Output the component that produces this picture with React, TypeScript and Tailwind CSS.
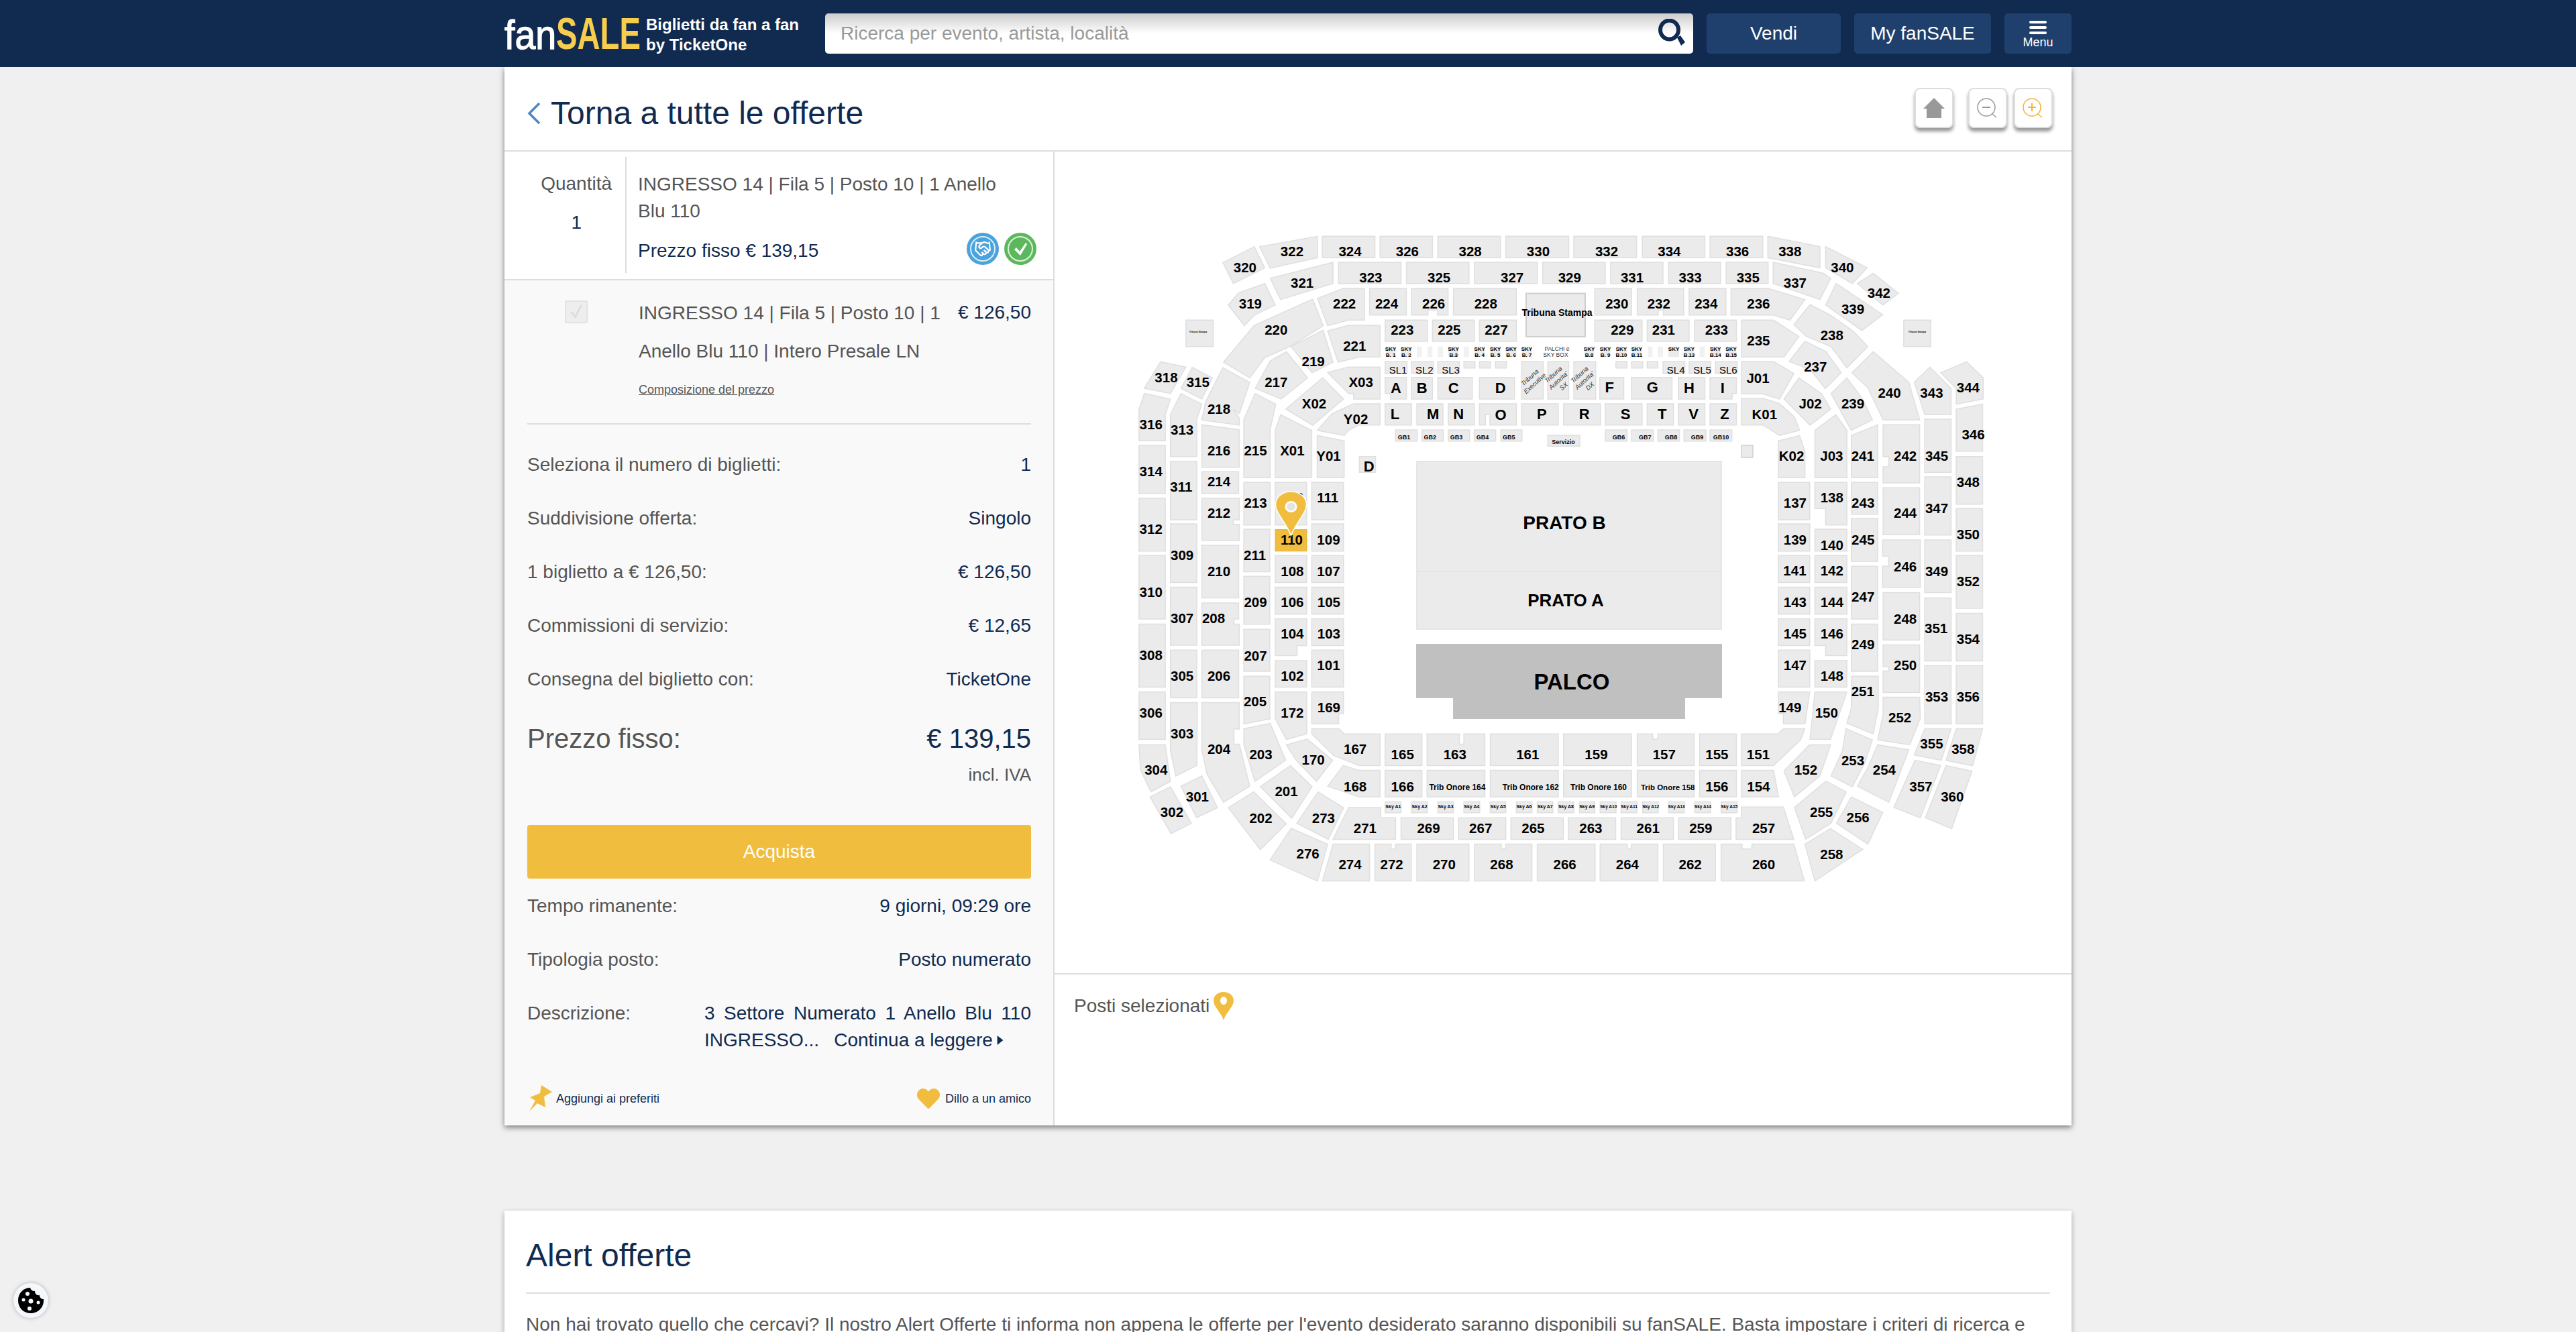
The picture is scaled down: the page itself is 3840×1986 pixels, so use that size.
import React from 'react'
import { FaHeart } from 'react-icons/fa'
import { Handshake } from 'lucide-react'

// Map data is written in the coordinates of four crops of the seating plan, then converted to page pixels
type Zone = { ox: number; oy: number; sx: number; sy: number }
type Sec = [string, number, number, string, number?, number?]

const ZA: Zone = { ox: 1680, oy: 320, sx: 2.24, sy: 3 }
const ZB: Zone = { ox: 2300, oy: 320, sx: 2.24, sy: 3 }
const ZC: Zone = { ox: 1680, oy: 780, sx: 2.24, sy: 2.8 }
const ZD: Zone = { ox: 2300, oy: 780, sx: 2.24, sy: 2.8 }

const R = (x1: number, y1: number, x2: number, y2: number) => `${x1},${y1} ${x2},${y1} ${x2},${y2} ${x1},${y2}`

const SECS_A: Sec[] = [
  ['322', 551, 165, '443,143 636,97 636,193 478,240'],
  ['324', 745, 165, R(652, 97, 828, 193)],
  ['326', 936, 165, R(845, 97, 1020, 193)],
  ['328', 1146, 165, R(1038, 97, 1247, 193)],
  ['330', 1373, 165, R(1265, 97, 1475, 193)],
  ['320', 394, 237, '320,215 425,143 460,238 355,308'],
  ['321', 585, 305, '478,285 688,213 688,308 513,380'],
  ['323', 814, 282, R(706, 213, 915, 308)],
  ['325', 1042, 282, R(933, 213, 1142, 308)],
  ['327', 1286, 282, R(1160, 213, 1370, 308)],
  ['329', 1478, 282, R(1388, 213, 1597, 308)],
  ['319', 412, 398, '338,404 373,350 460,308 495,404 425,450 392,497'],
  ['222', 726, 398, '636,375 722,330 793,330 793,472 740,472 670,497'],
  ['224', 867, 398, R(810, 330, 933, 449)],
  ['226', 1024, 398, '950,330 1072,330 1072,449 1037,449 1037,427 1005,427 1005,449 950,449'],
  ['228', 1198, 398, R(1090, 330, 1300, 449)],
  ['220', 498, 516, '322,660 425,495 620,378 655,497 545,590 460,640 410,730'],
  ['223', 919, 516, R(862, 472, 1003, 567)],
  ['225', 1076, 516, R(1020, 472, 1160, 567)],
  ['227', 1233, 516, R(1177, 472, 1300, 567)],
  ['221', 760, 587, '670,520 740,495 845,495 845,637 775,637 705,660'],
  ['219', 622, 657, '548,590 655,517 688,660 618,707'],
  ['SL1', 905, 694, R(862, 657, 935, 710), 15, 400],
  ['SL2', 993, 694, R(950, 657, 1023, 710), 15, 400],
  ['SL3', 1081, 694, R(1038, 657, 1110, 710), 15, 400],
  ['', 0, 0, R(1125, 657, 1162, 686)],
  ['', 0, 0, R(1177, 657, 1214, 686)],
  ['', 0, 0, R(1230, 657, 1267, 686)],
  ['', 0, 0, R(1318, 657, 1390, 825)],
  ['', 0, 0, R(1405, 657, 1475, 825)],
  ['', 0, 0, R(1492, 657, 1565, 825)],
  ['A', 898, 774, '862,728 933,728 933,825 880,825 880,800 862,800', 22],
  ['B', 985, 774, R(950, 728, 1020, 825), 22],
  ['C', 1090, 774, R(1038, 728, 1153, 825), 22],
  ['D', 1247, 774, R(1177, 728, 1294, 825), 22],
  ['L', 895, 892, R(862, 846, 950, 941), 22],
  ['M', 1022, 892, R(968, 846, 1055, 941), 22],
  ['N', 1107, 892, R(1073, 846, 1160, 941), 22],
  ['O', 1248, 893, '1177,846 1300,846 1300,941 1212,941 1212,895 1197,895 1197,941 1177,941', 22],
  ['P', 1385, 892, R(1318, 846, 1440, 941), 22],
  ['R', 1527, 892, R(1458, 846, 1581, 941), 22],
  ['X03', 781, 749, '670,706 740,682 845,682 845,825 757,825 757,800 740,800'],
  ['X02', 625, 845, '530,870 653,730 723,825 620,942'],
  ['Y02', 764, 914, '635,965 685,890 757,846 845,846 845,941 775,941 740,965 725,988'],
  ['217', 498, 750, '428,777 478,655 532,613 603,730 515,825'],
  ['218', 307, 870, '250,918 262,838 320,685 410,750 375,890 355,870 375,910 375,942'],
  ['318', 131, 728, '58,777 112,658 197,682 145,800'],
  ['315', 237, 750, '180,777 218,683 285,730 250,825'],
  ['316', 80, 938, '40,870 58,800 145,825 128,895 128,1012 40,1012'],
  ['313', 184, 962, '145,895 180,800 250,848 233,915 233,1082 145,1082'],
  ['216', 307, 1055, '250,940 375,962 375,1130 250,1130'],
  ['215', 429, 1055, '390,915 428,800 497,848 478,960 478,1177 390,1177'],
  ['X01', 552, 1055, '495,965 513,895 617,965 617,1177 495,1177'],
  ['Y01', 673, 1078, '635,988 725,1012 725,1177 635,1177'],
  ['D', 808, 1125, R(776, 1082, 830, 1153), 22],
  ['214', 307, 1193, R(250, 1150, 373, 1247)],
  ['311', 181, 1217, R(145, 1103, 233, 1365)],
  ['314', 80, 1148, R(40, 1033, 128, 1247)],
  ['213', 429, 1290, R(390, 1198, 478, 1388)],
  ['112', 552, 1266, R(495, 1198, 600, 1388)],
  ['111', 670, 1266, R(617, 1198, 723, 1365)],
  ['312', 80, 1407, R(40, 1268, 128, 1505)],
  ['212', 307, 1335, '250,1268 375,1268 375,1365 355,1365 355,1385 375,1385 375,1457 250,1457'],
  ['', 0, 0, R(197, 472, 288, 590)],
  ['GB1', 925, 996, R(897, 963, 969, 1013), 9],
  ['GB2', 1012, 996, R(985, 963, 1056, 1013), 9],
  ['GB3', 1100, 996, R(1073, 963, 1144, 1013), 9],
  ['GB4', 1187, 996, R(1160, 963, 1231, 1013), 9],
  ['GB5', 1275, 996, R(1248, 963, 1319, 1013), 9],
  ['Servizio', 1457, 1015, R(1405, 987, 1512, 1036), 9],
]

const SECS_B: Sec[] = [
  ['332', 213, 165, R(103, 97, 313, 193)],
  ['334', 422, 165, R(332, 97, 541, 193)],
  ['336', 650, 165, R(558, 97, 734, 193)],
  ['338', 825, 165, '751,97 925,143 925,238 751,193'],
  ['340', 1000, 237, '944,143 1083,238 1033,308 944,238'],
  ['342', 1122, 350, '1103,262 1187,352 1135,404 1050,308'],
  ['331', 298, 282, R(226, 213, 401, 308)],
  ['333', 492, 282, R(419, 213, 593, 308)],
  ['335', 685, 282, R(612, 213, 752, 308)],
  ['337', 842, 305, '769,213 935,262 961,285 925,380 769,308'],
  ['339', 1035, 422, '979,308 1135,448 1065,518 944,404'],
  ['230', 247, 398, R(173, 330, 296, 449)],
  ['232', 387, 398, '315,330 470,330 470,449 402,449 402,427 385,427 385,449 315,449'],
  ['234', 545, 398, R(488, 330, 611, 449)],
  ['236', 720, 398, '628,330 752,330 875,380 825,472 770,449 628,449'],
  ['229', 265, 516, R(173, 472, 331, 567)],
  ['231', 403, 516, R(348, 472, 488, 567)],
  ['233', 580, 516, R(506, 472, 646, 567)],
  ['235', 720, 563, '663,472 770,472 855,545 805,637 663,637'],
  ['238', 965, 540, '838,492 892,402 960,450 1035,520 1085,590 1015,685 962,590 880,545'],
  ['237', 910, 680, '822,657 875,566 945,612 996,707 943,778 892,692'],
  ['', 0, 0, R(244, 657, 281, 686)],
  ['', 0, 0, R(296, 657, 333, 686)],
  ['', 0, 0, R(348, 657, 384, 686)],
  ['SL4', 444, 694, R(401, 657, 474, 710), 15, 400],
  ['SL5', 532, 694, R(488, 657, 561, 710), 15, 400],
  ['SL6', 619, 694, R(576, 657, 649, 710), 15, 400],
  ['F', 222, 770, R(190, 728, 270, 825), 22],
  ['G', 366, 770, R(296, 728, 431, 825), 22],
  ['H', 488, 774, R(452, 728, 541, 825), 22],
  ['I', 600, 774, '558,728 646,728 646,800 632,800 632,825 558,825', 22],
  ['S', 276, 892, R(208, 846, 331, 941), 22],
  ['T', 398, 892, R(348, 846, 436, 941), 22],
  ['V', 503, 892, R(452, 846, 541, 941), 22],
  ['Z', 607, 892, R(558, 846, 646, 941), 22],
  ['J01', 718, 730, '663,657 770,657 838,710 790,825 735,802 663,802'],
  ['K01', 740, 892, '663,823 738,823 790,845 840,905 857,965 790,988 735,941 663,941'],
  ['J02', 893, 845, '805,825 855,730 930,800 961,870 892,942'],
  ['239', 1035, 845, '962,800 1015,730 1065,820 1100,918 1030,965'],
  ['240', 1157, 798, '1032,707 1103,613 1222,750 1258,918 1136,918 1085,775'],
  ['343', 1298, 798, '1240,750 1292,682 1363,778 1363,895 1275,895'],
  ['344', 1420, 773, '1328,707 1415,658 1470,730 1470,825 1380,848 1380,778'],
  ['346', 1437, 984, '1380,870 1468,848 1468,1058 1380,1058'],
  ['K02', 830, 1080, '786,1012 857,988 875,1060 875,1177 786,1177'],
  ['J03', 964, 1080, '908,965 978,895 1015,965 1015,1177 908,1177'],
  ['241', 1068, 1078, '1030,988 1118,940 1118,1177 1030,1177'],
  ['242', 1210, 1078, '1136,940 1258,940 1258,1200 1136,1200 1136,1128 1155,1128 1155,1082 1136,1082'],
  ['345', 1315, 1080, R(1275, 915, 1363, 1153)],
  ['348', 1420, 1197, R(1380, 1082, 1468, 1295)],
  ['137', 842, 1290, R(786, 1198, 891, 1365)],
  ['138', 965, 1266, '908,1198 1015,1198 1015,1388 944,1388 944,1315 908,1315'],
  ['243', 1069, 1290, R(1030, 1198, 1118, 1340)],
  ['244', 1210, 1335, R(1136, 1222, 1258, 1432)],
  ['347', 1315, 1313, R(1275, 1173, 1363, 1433)],
  ['350', 1420, 1430, R(1380, 1315, 1468, 1505)],
  ['', 0, 0, R(1205, 472, 1295, 590)],
  ['GB6', 253, 996, R(208, 963, 281, 1013), 9],
  ['GB7', 341, 996, R(296, 963, 369, 1013), 9],
  ['GB8', 428, 996, R(384, 963, 456, 1013), 9],
  ['GB9', 515, 996, R(471, 963, 544, 1013), 9],
  ['GB10', 595, 996, R(558, 963, 631, 1013), 9],
]

const SECS_C: Sec[] = [
  ['309', 184, 134, R(145, 3, 233, 248)],
  ['211', 427, 134, R(390, 25, 477, 203)],
  ['109', 673, 70, R(617, 3, 723, 117)],
  ['210', 307, 201, R(250, 92, 373, 312)],
  ['108', 552, 201, R(495, 135, 600, 248)],
  ['107', 673, 201, R(617, 135, 723, 248)],
  ['310', 80, 288, R(40, 135, 128, 400)],
  ['209', 429, 330, R(390, 222, 477, 422)],
  ['106', 552, 330, R(495, 267, 600, 380)],
  ['105', 674, 330, R(617, 267, 723, 380)],
  ['307', 184, 397, R(145, 267, 233, 510)],
  ['208', 289, 397, '250,333 373,333 373,400 357,400 357,421 375,421 375,510 250,510'],
  ['104', 552, 462, '495,399 600,399 600,511 568,511 568,553 495,553'],
  ['103', 674, 462, R(617, 399, 723, 511)],
  ['207', 429, 552, R(390, 443, 477, 619)],
  ['308', 80, 551, R(40, 421, 128, 685)],
  ['305', 184, 638, R(145, 530, 233, 729)],
  ['206', 307, 638, R(250, 530, 373, 729)],
  ['102', 552, 638, R(495, 574, 600, 685)],
  ['101', 673, 593, R(617, 530, 723, 685)],
  ['205', 428, 745, '390,639 477,639 477,817 390,838'],
  ['172', 552, 790, '495,705 600,705 600,880 532,903 495,815'],
  ['169', 674, 770, '617,705 723,705 723,795 707,795 707,838 617,838'],
  ['306', 80, 790, R(40, 705, 128, 903)],
  ['303', 184, 879, '145,749 235,749 233,1012 163,1056 145,950'],
  ['204', 307, 943, '250,749 375,749 375,860 357,860 357,923 375,923 410,1098 322,1165 268,1050 250,950'],
  ['304', 97, 1030, '40,925 128,925 145,1078 80,1122 45,1030'],
  ['203', 447, 966, '390,858 478,836 530,990 427,1078 390,925'],
  ['170', 622, 988, '532,925 602,902 687,990 633,1078 565,990'],
  ['167', 762, 943, '617,858 708,858 725,880 845,880 845,1012 775,1012 690,970 617,880'],
  ['165', 920, 966, R(862, 880, 985, 1012)],
  ['163', 1095, 966, '1002,880 1110,880 1110,923 1125,923 1125,880 1195,880 1195,1012 1002,1012'],
  ['161', 1338, 966, R(1213, 880, 1440, 1012)],
  ['168', 762, 1098, '670,1098 722,1012 775,1032 845,1032 845,1143 775,1143'],
  ['166', 920, 1098, R(862, 1032, 985, 1143)],
  ['Trib Onore 164', 1103, 1102, R(1002, 1032, 1195, 1143), 12],
  ['Trib Onore 162', 1348, 1102, R(1213, 1032, 1440, 1143), 12],
  ['Sky A1', 889, 1184, R(862, 1163, 915, 1209), 7],
  ['Sky A2', 977, 1184, R(950, 1163, 1003, 1209), 7],
  ['Sky A3', 1064, 1184, R(1038, 1163, 1090, 1209), 7],
  ['Sky A4', 1151, 1184, R(1125, 1163, 1178, 1209), 7],
  ['Sky A5', 1239, 1184, R(1213, 1163, 1265, 1209), 7],
  ['Sky A6', 1326, 1184, R(1300, 1163, 1352, 1209), 7],
  ['Sky A7', 1396, 1184, R(1370, 1163, 1422, 1209), 7],
  ['Sky A8', 1466, 1184, R(1440, 1163, 1492, 1209), 7],
  ['Sky A9', 1536, 1184, R(1511, 1163, 1562, 1209), 7],
  ['301', 235, 1140, '180,1098 250,1055 302,1188 232,1230'],
  ['302', 150, 1207, '77,1143 145,1100 215,1253 147,1296'],
  ['201', 532, 1120, '445,1100 546,1012 618,1100 550,1232'],
  ['202', 447, 1230, '338,1188 423,1122 532,1255 445,1363'],
  ['273', 656, 1230, '638,1122 723,1188 672,1320 567,1253'],
  ['271', 795, 1272, '740,1187 847,1187 847,1230 897,1230 897,1320 688,1320'],
  ['269', 1007, 1272, R(915, 1230, 1090, 1320)],
  ['267', 1181, 1272, R(1107, 1230, 1265, 1320)],
  ['265', 1356, 1272, R(1282, 1230, 1457, 1320)],
  ['276', 604, 1380, '478,1406 548,1274 670,1340 636,1494'],
  ['274', 745, 1425, '688,1340 810,1340 810,1494 653,1494'],
  ['272', 884, 1425, '828,1340 882,1340 882,1360 897,1360 897,1340 949,1340 949,1494 828,1494'],
  ['270', 1059, 1425, R(968, 1340, 1142, 1494)],
  ['268', 1251, 1425, '1160,1340 1250,1340 1250,1360 1265,1360 1265,1340 1352,1340 1352,1494 1160,1494'],
  ['266', 1462, 1425, R(1370, 1340, 1563, 1494)],
]

const SECS_D: Sec[] = [
  ['159', 178, 966, R(69, 880, 296, 1012)],
  ['157', 405, 966, '315,880 367,880 367,902 384,902 384,880 505,880 505,1012 315,1012'],
  ['155', 581, 966, R(523, 880, 646, 1012)],
  ['151', 719, 966, '663,880 785,880 803,858 875,858 860,905 770,1012 663,1012'],
  ['Trib Onore 160', 186, 1102, R(69, 1032, 296, 1143), 12],
  ['Trib Onore 158', 417, 1102, R(315, 1032, 505, 1143), 11.5],
  ['156', 581, 1098, R(523, 1032, 646, 1143)],
  ['154', 720, 1098, '663,1032 770,1032 787,1143 663,1143'],
  ['Sky A10', 219, 1184, R(191, 1163, 244, 1209), 6.5],
  ['Sky A11', 288, 1184, R(261, 1163, 314, 1209), 6.5],
  ['Sky A12', 360, 1184, R(333, 1163, 385, 1209), 6.5],
  ['Sky A13', 446, 1184, R(420, 1163, 472, 1209), 6.5],
  ['Sky A14', 534, 1184, R(507, 1163, 560, 1209), 6.5],
  ['Sky A15', 622, 1184, R(595, 1163, 648, 1209), 6.5],
  ['263', 160, 1272, R(85, 1230, 243, 1320)],
  ['261', 351, 1272, R(261, 1230, 436, 1320)],
  ['259', 527, 1272, R(453, 1230, 628, 1320)],
  ['257', 737, 1272, '663,1185 803,1185 838,1320 645,1320 645,1230 663,1230'],
  ['264', 282, 1425, '191,1340 282,1340 282,1360 295,1360 295,1340 384,1340 384,1494 191,1494'],
  ['262', 492, 1425, R(402, 1340, 576, 1494)],
  ['260', 737, 1425, '595,1340 665,1340 665,1360 698,1360 698,1340 838,1340 873,1494 595,1494'],
  ['139', 842, 70, R(786, 3, 891, 117)],
  ['140', 965, 92, R(908, 25, 1015, 117)],
  ['245', 1069, 70, R(1030, -20, 1118, 160)],
  ['246', 1210, 180, '1134,70 1260,70 1260,268 1134,268 1134,180 1155,180 1155,138 1134,138'],
  ['349', 1315, 201, R(1275, 70, 1363, 290)],
  ['352', 1420, 243, R(1380, 135, 1468, 356)],
  ['141', 841, 198, R(786, 135, 891, 248)],
  ['142', 965, 198, R(908, 135, 1015, 248)],
  ['143', 842, 330, R(786, 267, 891, 380)],
  ['144', 965, 330, R(908, 267, 1015, 380)],
  ['145', 842, 462, R(786, 399, 891, 511)],
  ['146', 965, 462, '908,399 1015,399 1015,553 944,553 944,511 908,511'],
  ['147', 842, 593, R(786, 530, 891, 685)],
  ['148', 965, 638, R(908, 574, 1015, 685)],
  ['247', 1069, 308, R(1030, 180, 1118, 400)],
  ['248', 1210, 398, R(1136, 290, 1258, 488)],
  ['351', 1313, 439, R(1275, 312, 1363, 575)],
  ['354', 1420, 484, R(1380, 377, 1468, 575)],
  ['249', 1069, 506, R(1030, 421, 1118, 619)],
  ['250', 1210, 593, '1136,508 1258,508 1258,707 1136,707 1136,617 1155,617 1155,599 1136,599'],
  ['353', 1315, 725, R(1275, 595, 1363, 838)],
  ['356', 1420, 725, R(1380, 595, 1468, 838)],
  ['251', 1068, 703, '1030,639 1120,639 1120,770 1103,880 1015,835 1030,770'],
  ['149', 825, 770, '786,705 891,705 875,838 803,838 803,795 786,795'],
  ['150', 947, 790, '908,705 1015,705 960,903 892,903'],
  ['252', 1192, 812, '1136,727 1258,727 1260,815 1225,925 1118,905 1136,800'],
  ['253', 1035, 989, '1012,858 1100,905 1075,1000 1033,1100 962,1055 1000,950'],
  ['254', 1140, 1030, '1118,925 1222,946 1155,1165 1050,1098 1085,1020'],
  ['152', 878, 1030, '805,1035 890,925 961,925 925,1055 840,1143'],
  ['355', 1298, 921, '1275,858 1363,858 1330,990 1240,968'],
  ['358', 1403, 943, '1380,858 1468,858 1435,1013 1346,990'],
  ['357', 1262, 1098, '1242,990 1328,1012 1260,1230 1172,1187'],
  ['360', 1367, 1140, '1346,1012 1433,1035 1365,1275 1277,1230'],
  ['255', 930, 1207, '840,1187 945,1077 1013,1122 962,1253 877,1320'],
  ['256', 1052, 1229, '1030,1143 1135,1208 1085,1340 980,1253'],
  ['258', 964, 1381, '875,1340 960,1275 1068,1362 908,1494'],
]

// x1, x2 in the crop, second line of the label ('' for the pale boxes)
const SKY_A: [number, number, string][] = [
  [864, 897, 'B. 1'], [915, 950, 'B. 2'], [968, 985, ''], [1003, 1020, ''], [1038, 1055, ''], [1073, 1107, 'B.3'],
  [1125, 1142, ''], [1160, 1195, 'B. 4'], [1213, 1247, 'B. 5'], [1265, 1300, 'B. 6'], [1318, 1352, 'B. 7'], [1527, 1560, 'B.8'],
]
const SKY_B: [number, number, string][] = [
  [192, 225, 'B. 9'], [244, 280, 'B.10'], [296, 331, 'B.11'], [350, 366, ''], [384, 401, ''], [419, 455, ' '],
  [471, 505, 'B.13'], [523, 541, ''], [559, 593, 'B.14'], [611, 646, 'B.15'],
]

const px = (z: Zone, x: number) => z.ox + x / z.sx
const py = (z: Zone, y: number) => z.oy + y / z.sy
const toPage = (z: Zone, pts: string) =>
  pts.split(' ').map((p) => {
    const [x, y] = p.split(',').map(Number)
    return `${px(z, x).toFixed(1)},${py(z, y).toFixed(1)}`
  }).join(' ')

function Sections({ zone, secs }: { zone: Zone; secs: Sec[] }) {
  return (
    <>
      {secs.map(([label, cx, cy, pts, size = 20.5, weight = 700], i) => (
        <g key={i}>
          <polygon points={toPage(zone, pts)} fill="#ebebeb" stroke="#dfdfdf" strokeWidth="1.5" />
          {label && (
            <text x={px(zone, cx)} y={py(zone, cy) + size * 0.36} fontSize={size} fontWeight={weight} textAnchor="middle" fill="#000">
              {label}
            </text>
          )}
        </g>
      ))}
    </>
  )
}

function SkyBoxes({ zone, boxes }: { zone: Zone; boxes: [number, number, string][] }) {
  return (
    <>
      {boxes.map(([x1, x2, line2], i) => (
        <g key={i}>
          <polygon points={toPage(zone, R(x1, 590, x2, 637))} fill={line2 ? '#ebebeb' : '#f1f1f1'} />
          {line2 && (
            <>
              <text x={px(zone, (x1 + x2) / 2)} y={py(zone, 610)} fontSize="8" fontWeight="700" textAnchor="middle">SKY</text>
              <text x={px(zone, (x1 + x2) / 2)} y={py(zone, 636)} fontSize="8" fontWeight="700" textAnchor="middle">{line2}</text>
            </>
          )}
        </g>
      ))}
    </>
  )
}

function Slanted({ cx, lines }: { cx: number; lines: string[] }) {
  const start = -((lines.length - 1) * 11.5) / 2 + 3.5
  return (
    <g transform={`translate(${cx} 567) rotate(-42)`}>
      {lines.map((line, i) => (
        <text key={i} y={start + i * 11.5} fontSize="9.5" fontStyle="italic" textAnchor="middle" fill="#333">
          {line}
        </text>
      ))}
    </g>
  )
}

function StadiumMap() {
  return (
    <svg viewBox="1572 226 1516 1225" className="block w-[1516px] h-[1225px]">
      <Sections zone={ZA} secs={SECS_A} />
      <Sections zone={ZB} secs={SECS_B} />
      <Sections zone={ZC} secs={SECS_C} />
      <Sections zone={ZD} secs={SECS_D} />
      <SkyBoxes zone={ZA} boxes={SKY_A} />
      <SkyBoxes zone={ZB} boxes={SKY_B} />

      {/* tribuna stampa, palchi label, side boxes */}
      <rect x="2275" y="437.5" width="88" height="64.5" fill="#ebebeb" stroke="#cfcfcf" strokeWidth="2" />
      <text x="2321" y="471" fontSize="14" fontWeight="700" textAnchor="middle">Tribuna Stampa</text>
      <text x="2321" y="523" fontSize="8.5" textAnchor="middle" fill="#333">PALCHI e</text>
      <text x="2319" y="531.500" fontSize="8.5" textAnchor="middle" fill="#333">SKY BOX</text>
      <text x="1786" y="496" fontSize="3.5" fontWeight="700" textAnchor="middle">Tribuna Stampa</text>
      <text x="2858" y="496" fontSize="3.5" fontWeight="700" textAnchor="middle">Tribuna Stampa</text>
      <rect x="2596" y="664" width="17" height="18" fill="#ebebeb" stroke="#cfcfcf" strokeWidth="1.5" />

      <Slanted cx={2284} lines={['Tribuna', 'Executive']} />
      <Slanted cx={2323} lines={['Tribuna', "Autorita'", 'SX']} />
      <Slanted cx={2362} lines={['Tribuna', "Autorita'", 'DX']} />

      {/* prato + palco */}
      <rect x="2112" y="688" width="454" height="250" fill="#ebebeb" stroke="#dfdfdf" strokeWidth="1.5" />
      <line x1="2112" y1="852" x2="2566" y2="852" stroke="#dfdfdf" strokeWidth="1" />
      <text x="2332" y="789" fontSize="28" fontWeight="700" textAnchor="middle">PRATO B</text>
      <text x="2334" y="904" fontSize="26" fontWeight="700" textAnchor="middle">PRATO A</text>
      <polygon points="2111,960 2567,960 2567,1041 2512,1041 2512,1072 2166,1072 2166,1041 2111,1041" fill="#c0c0c0" />
      <text x="2343" y="1028" fontSize="33" fontWeight="700" textAnchor="middle">PALCO</text>

      {/* selected sector + pin */}
      <rect x="1901" y="789.6" width="47" height="32.2" fill="#f0bd3f" stroke="#e3b33c" />
      <text x="1925.5" y="812" fontSize="20.5" fontWeight="700" textAnchor="middle">110</text>
      <path
        d="M1924.5 798.6c-3-9-9-17-15-27-5-8-8-13-8-19 0-12 10-19.600 23-19.600s23 7.600 23 19.600c0 6-3 11-8 19-6 10-12 18-15 27z"
        fill="#f0bd3f"
        stroke="#fff"
        strokeWidth="1.5"
      />
      <ellipse cx="1924.500" cy="755.500" rx="9" ry="8.500" fill="#fff" />
      <ellipse cx="1924.500" cy="755.500" rx="6.500" ry="6" fill="#e4e4e4" />
    </svg>
  )
}

function Logo() {
  return (
    <svg viewBox="0 0 205 84" className="w-[205px] h-[84px] shrink-0">
      <text transform="translate(0 65) scale(0.895 1)" fontSize="62" fill="#fff" stroke="#fff" strokeWidth="1.4">fan</text>
      <text transform="translate(77 65) scale(0.716 1)" fontSize="66" fontWeight="700" fill="#f7cd4d">SALE</text>
    </svg>
  )
}

function SearchIcon() {
  return (
    <svg viewBox="0 0 40 44" className="w-[40px] h-[44px]">
      <ellipse cx="16.500" cy="16.500" rx="13.500" ry="14" fill="none" stroke="#102a50" strokeWidth="6" />
      <path d="M28 28l5-3 7 10-6 5z" fill="#102a50" />
    </svg>
  )
}

function Row({ label, value }: { label: string; value: string }) {
  return (
    <div className="flex h-[80px] items-center justify-between">
      <span className="text-[#555]">{label}</span>
      <span className="text-[#102a50]">{value}</span>
    </div>
  )
}

function MapButton({ children, className }: { children: React.ReactNode; className?: string }) {
  return (
    <div className={`flex h-[60px] w-[58px] items-center justify-center rounded-lg border-2 border-[#ddd] bg-white shadow-[0_5px_5px_rgba(0,0,0,0.4)] ${className ?? ''}`}>
      {children}
    </div>
  )
}

function Badge({ color, children }: { color: string; children: React.ReactNode }) {
  return (
    <div className="flex h-[48px] w-[48px] items-center justify-center rounded-full" style={{ backgroundColor: color }}>
      <div className="flex h-[38px] w-[38px] items-center justify-center rounded-full border-2 border-white/80">{children}</div>
    </div>
  )
}

export default function App() {
  return (
    <div className="relative h-[1986px] overflow-hidden bg-[#f0f0f0] font-['Liberation_Sans',Arial,sans-serif] text-[28px] leading-[40px]">
      <header className="relative z-10 h-[100px] bg-[#102a50]">
        <div className="mx-auto flex h-full w-[2336px] items-center">
          <Logo />
          <div className="ml-[6px] w-[240px] pt-[3px] text-[24px] font-bold leading-[30px] text-white">
            Biglietti da fan a fan
            <br />
            by TicketOne
          </div>
          <div className="ml-[27px] flex h-[60px] w-[1294px] items-center justify-between rounded-[5px] bg-gradient-to-b from-[#cccccc] to-white to-50% pl-[23px] pr-[12px]">
            <span className="text-[#999]">Ricerca per evento, artista, località</span>
            <SearchIcon />
          </div>
          <div className="ml-[20px] flex h-[60px] w-[200px] items-center justify-center rounded-[5px] bg-[#1f406c] text-white">Vendi</div>
          <div className="ml-[20px] flex h-[60px] w-[204px] items-center justify-center rounded-[5px] bg-[#1f406c] text-white">My fanSALE</div>
          <div className="ml-[20px] flex h-[60px] w-[100px] flex-col items-center justify-center rounded-[5px] bg-[#1f406c] pt-[6px] text-white">
            <div className="flex flex-col gap-[4px]">
              <div className="h-[4px] w-[26px] rounded-full bg-white" />
              <div className="h-[4px] w-[26px] rounded-full bg-white" />
              <div className="h-[4px] w-[26px] rounded-full bg-white" />
            </div>
            <span className="text-[18px] leading-[24px]">Menu</span>
          </div>
        </div>
      </header>

      <main className="mx-auto w-[2336px]">
        <section className="bg-white shadow-[0_3px_8px_rgba(0,0,0,0.5)]">
          <div className="flex h-[126px] items-center justify-between border-b-2 border-[#ddd] pl-[34px] pr-[28px]">
            <div className="flex items-center gap-[15px] pt-[14px]">
              <svg viewBox="0 0 20 32" className="h-[32px] w-[20px]">
                <polyline points="18,1 3,16 18,31" fill="none" stroke="#4a86c8" strokeWidth="3.500" />
              </svg>
              <h1 className="text-[48px] leading-[60px] text-[#102a50]">Torna a tutte le offerte</h1>
            </div>
            <div className="flex pb-[2px]">
              <MapButton className="mr-[22px]">
                <svg viewBox="0 0 32 30" className="h-[30px] w-[32px]">
                  <polygon points="16,0 32,16 27,16 27,30 5,30 5,16 0,16" fill="#999" />
                </svg>
              </MapButton>
              <MapButton className="mr-[10px]">
                <svg viewBox="0 0 32 30" className="h-[30px] w-[32px]" fill="none" stroke="#999" strokeWidth="1.500">
                  <circle cx="14" cy="14" r="13" />
                  <line x1="23" y1="24" x2="29" y2="29" />
                  <line x1="8" y1="14" x2="20" y2="14" strokeWidth="2" />
                </svg>
              </MapButton>
              <MapButton>
                <svg viewBox="0 0 32 30" className="h-[30px] w-[32px]" fill="none" stroke="#f5b335" strokeWidth="1.500">
                  <circle cx="14" cy="14" r="13" />
                  <line x1="23" y1="24" x2="29" y2="29" />
                  <line x1="8" y1="14" x2="20" y2="14" strokeWidth="2" />
                  <line x1="14" y1="8" x2="14" y2="20" strokeWidth="2" />
                </svg>
              </MapButton>
            </div>
          </div>

          <div className="flex">
            <div className="h-[1452px] w-[820px] shrink-0 border-r-2 border-[#ddd] bg-[#f9f9f9]">
              <div className="flex h-[192px] border-b-2 border-[#ddd] bg-white">
                <div className="mt-[8px] h-[173px] w-[182px] border-r-2 border-[#ddd] pr-[20px] pt-[20px] text-right">
                  <div className="text-[#555]">Quantità</div>
                  <div className="mr-[45px] mt-[18px] text-[#102a50]">1</div>
                </div>
                <div className="flex-1 pl-[17px] pr-[25px] pt-[29px]">
                  <div className="w-[560px] text-[#555]">INGRESSO 14 | Fila 5 | Posto 10 | 1 Anello Blu 110</div>
                  <div className="mt-[18px] flex items-center justify-between">
                    <span className="text-[#102a50]">Prezzo fisso € 139,15</span>
                    <div className="-mt-[6px] flex gap-[8px]">
                      <Badge color="#4ba3dc">
                        <Handshake size={26} color="#fff" strokeWidth={2} />
                      </Badge>
                      <Badge color="#5cb85c">
                        <svg viewBox="0 0 24 24" className="h-[24px] w-[24px]">
                          <path d="M3 13l3-3 5 6L20 3l2 2-10 17z" fill="#fff" />
                        </svg>
                      </Badge>
                    </div>
                  </div>
                </div>
              </div>

              <div className="pl-[34px] pr-[33px]">
                <div className="border-b-2 border-[#ddd] pb-[38px] pt-[20px]">
                  <div className="flex">
                    <div className="w-[166px] shrink-0 pl-[56px] pt-[10px]">
                      <div className="flex h-[34px] w-[34px] items-center justify-center rounded-[2px] border-2 border-[#e2e2e2] bg-[#eee]">
                        <svg viewBox="0 0 24 24" className="h-[28px] w-[24px]">
                          <path d="M3 13l3-2 4 6L19 1l2 1-10 20z" fill="#ddd" />
                        </svg>
                      </div>
                    </div>
                    <div className="w-[470px] shrink-0 leading-[57px] text-[#555]">
                      INGRESSO 14 | Fila 5 | Posto 10 | 1 Anello Blu 110 | Intero Presale LN
                    </div>
                    <div className="flex-1 pt-[8px] text-right text-[#102a50]">€ 126,50</div>
                  </div>
                  <div className="ml-[166px] mt-[17px] text-[18px] leading-[24px] text-[#555] underline">Composizione del prezzo</div>
                </div>

                <div className="pt-[20px]">
                  <Row label="Seleziona il numero di biglietti:" value="1" />
                  <Row label="Suddivisione offerta:" value="Singolo" />
                  <Row label="1 biglietto a € 126,50:" value="€ 126,50" />
                  <Row label="Commissioni di servizio:" value="€ 12,65" />
                  <Row label="Consegna del biglietto con:" value="TicketOne" />
                </div>

                <div className="mt-[18px] flex h-[60px] items-center justify-between text-[40px]">
                  <span className="text-[#555]">Prezzo fisso:</span>
                  <span className="text-[#102a50]">€ 139,15</span>
                </div>
                <div className="mt-[4px] text-right text-[26px] text-[#555]">incl. IVA</div>

                <div className="mt-[55px] flex h-[80px] items-center justify-center rounded-[4px] bg-[#f0bd3f] text-white">Acquista</div>

                <div className="mt-px">
                  <Row label="Tempo rimanente:" value="9 giorni, 09:29 ore" />
                  <Row label="Tipologia posto:" value="Posto numerato" />
                </div>

                <div className="flex justify-between pt-[20px]">
                  <span className="text-[#555]">Descrizione:</span>
                  <div className="w-[487px] text-[#102a50]">
                    <div className="[text-align-last:justify]">3 Settore Numerato 1 Anello Blu 110</div>
                    <div className="flex items-center">
                      <span>INGRESSO...</span>
                      <span className="ml-[22px]">Continua a leggere</span>
                      <svg viewBox="0 0 10 16" className="ml-[6px] h-[14px] w-[10px]">
                        <polygon points="0,0 10,8 0,16" fill="#102a50" />
                      </svg>
                    </div>
                  </div>
                </div>

                <div className="mt-[47px] flex items-center justify-between text-[18px] leading-[24px] text-[#102a50]">
                  <div className="flex items-center gap-[6px]">
                    <svg viewBox="0 0 34 39" className="ml-[3px] h-[39px] w-[34px]">
                      <path d="M18 0L34 10L22 17L24 33L12 27L0 39L9 23L1 18L16 12Z" fill="#f0bd3f" />
                    </svg>
                    <span>Aggiungi ai preferiti</span>
                  </div>
                  <div className="flex items-center gap-[6px]">
                    <FaHeart className="h-[34px] w-[38px] text-[#f0bd3f]" />
                    <span>Dillo a un amico</span>
                  </div>
                </div>
              </div>
            </div>

            <div className="flex-1">
              <div className="border-b-2 border-[#ddd]">
                <StadiumMap />
              </div>
              <div className="flex items-center gap-[6px] pl-[29px] pt-[26px]">
                <span className="text-[#555]">Posti selezionati</span>
                <svg viewBox="0 0 30 42" className="h-[42px] w-[30px]">
                  <path d="M15 42C11 30 0 22 0 13 0 5 7 0 15 0s15 5 15 13c0 9-11 17-15 29z" fill="#f0bd3f" />
                  <ellipse cx="15" cy="13" rx="5" ry="6" fill="#fff" />
                </svg>
              </div>
            </div>
          </div>
        </section>

        <section className="mt-[127px] bg-white px-[32px] pt-[37px] shadow-[0_3px_8px_rgba(0,0,0,0.3)]">
          <h2 className="border-b-2 border-[#ddd] pb-[25px] text-[48px] leading-[60px] text-[#102a50]">Alert offerte</h2>
          <p className="mt-[26px] text-[#555]">
            Non hai trovato quello che cercavi? Il nostro Alert Offerte ti informa non appena le offerte per l'evento desiderato saranno disponibili su fanSALE. Basta impostare i criteri di ricerca e
          </p>
        </section>
      </main>

      <div className="absolute bottom-[21px] left-[20px] flex h-[52px] w-[52px] items-center justify-center rounded-full bg-[#f4f7fb] shadow-[0_0_6px_rgba(0,0,0,0.25)]">
        <svg viewBox="0 0 40 40" className="h-[40px] w-[40px]">
          <path d="M19 1c1 4 4 5 7 5 0 4 3 7 7 6 0 4 3 6 6 6 1 12-8 21-19 21S1 31 1 20 9 1 19 1z" fill="#000" />
          <ellipse cx="15" cy="10" rx="3" ry="3" fill="#f4f7fb" />
          <ellipse cx="9" cy="19" rx="2.500" ry="2.500" fill="#f4f7fb" />
          <ellipse cx="20" cy="21" rx="3.500" ry="3.500" fill="#f4f7fb" />
          <ellipse cx="31" cy="23" rx="2.500" ry="2.500" fill="#f4f7fb" />
          <ellipse cx="18" cy="32" rx="3" ry="3" fill="#f4f7fb" />
        </svg>
      </div>
    </div>
  )
}
